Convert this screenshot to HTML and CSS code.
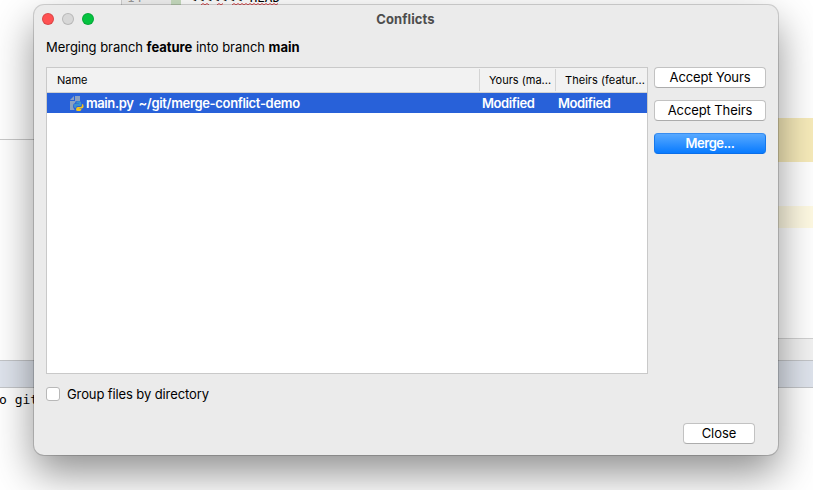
FILE: index.html
```html
<!DOCTYPE html>
<html lang="en">
<head>
<meta charset="utf-8">
<title>Conflicts</title>
<link rel="stylesheet" href="styles.css">
</head>
<body>
<div class="screen">
  <div class="ide">
    <div class="workspace">
      <div class="sidebar"><div class="sidebar-top"></div></div>
      <div class="editor">
        <div class="code">
          <div class="gutter">14</div>
          <div class="change"></div>
          <div class="lines">
            <div class="line">
              <div class="source">&lt;&lt;&lt;&lt;&lt;&lt;&lt; HEAD</div>
              <svg class="squiggles" width="90" height="3" viewBox="0 0 90 3" fill="none" stroke="#e5484d">
                <path d="M11 2l2-1.500 2 1.500 2-1.500 2 1.500M27 2l2-1.500 2 1.500 2-1.500M42 2l2-1.500 2 1.500 2-1.500 2 1.500 2-1.500 2 1.500 2-1.500 2 1.500 2-1.500 2 1.500 2-1.500 2 1.500 2-1.500 2 1.500 2-1.500 2 1.500 2-1.500 2 1.500 2-1.500 2 1.500 2-1.500 2 1.500 2-1.500"/>
              </svg>
            </div>
            <div class="highlight strong"></div>
            <div class="highlight soft"></div>
          </div>
        </div>
        <div class="breadcrumbs"></div>
      </div>
    </div>
    <div class="toolbar"></div>
    <div class="terminal">o git</div>
  </div>

  <main class="dialog">
    <header class="titlebar">
      <div class="lights"><i class="red"></i><i class="gray"></i><i class="green"></i></div>
      <h1>Conflicts</h1>
    </header>
    <p class="message">Merging branch <b>feature</b> into branch <b>main</b></p>
    <div class="content">
      <div class="table">
        <div class="row head"><div>Name</div><div>Yours (ma...</div><div>Theirs (featur...</div></div>
        <div class="row selected">
          <div class="file">
            <svg width="15" height="16" viewBox="0 0 15 16">
              <path d="M6 1h5v5H8Q6 6 6 8 4 8.500 4 11t1.500 3.500V15H1V6h5z" fill="#8ba1c1"/>
              <path d="M1 5l4-4v4z" fill="#8ba1c1"/>
              <path d="M8.500 6.300h2.200q1.500 0 1.500 1.500v2q0 1.200-1.200 1.200H8.500q-1.500 0-1.500 2-2.300 0-2.300-2.200T7 8.800h3v-.500H7.300q-.300-2 1.200-2z" fill="#3b91cf"/>
              <path d="M12.900 9q1.700 0 1.700 2.200t-2.200 2.300h-1.900v.500h1.900q0 2-1.600 2H8.700Q7 16 7 14.500q0-2.500 1.700-2.500h2.700q1.500 0 1.500-1.500z" fill="#f3c51c"/>
            </svg>
            <span>main.py</span><span class="path">~/git/merge-conflict-demo</span>
          </div>
          <div>Modified</div><div>Modified</div>
        </div>
      </div>
      <div class="actions">
        <button>Accept Yours</button>
        <button class="theirs">Accept Theirs</button>
        <button class="primary">Merge...</button>
      </div>
    </div>
    <label class="group"><i class="box"></i><span>Group files by directory</span></label>
    <footer><button class="close">Close</button></footer>
  </main>
</div>
</body>
</html>
```
FILE: styles.css
```css
* { box-sizing: border-box; }
body {
  margin: 0;
  overflow: hidden;
  background: #fff;
  color: #000;
  font: 13px/16px Inter, "Liberation Sans", sans-serif;
}
.screen { display: grid; width: 813px; height: 490px; overflow: hidden; }
.ide, .dialog { grid-area: 1 / 1; }

.ide { display: flex; flex-direction: column; min-width: 0; }
.workspace { display: flex; height: 360px; }
.sidebar { width: 122px; border-right: 1px solid #d0d0d0; }
.sidebar-top { height: 140px; border-bottom: 1px solid #c9c9c9; }
.editor { flex: 1; display: flex; flex-direction: column; }
.code { flex: 1; display: flex; min-height: 0; }
.gutter, .source { font: 12.6px/16px "DejaVu Sans Mono", monospace; }
.gutter { width: 49px; padding-left: 5px; background: #f2f2f2; color: #999; line-height: 0; margin-top: -2px; }
.change { width: 10px; background: #c9dec1; }
.lines { flex: 1; display: flex; flex-direction: column; }
.line { height: 118px; padding-left: 8px; }
.source { height: 16px; margin-top: -10px; }
.squiggles { display: block; margin: -3px 0 0 1px; }
.highlight.strong { height: 44px; background: #f7ebba; }
.highlight.soft { height: 22px; margin-top: 44px; background: #fffae3; }
.breadcrumbs { height: 22px; border-top: 1px solid #d1d1d1; background: #f2f2f2; }
.toolbar { height: 28px; border: solid #c3c5c8; border-width: 1px 0; background: #dfe4ed; }
.terminal { margin-left: -1px; padding-top: 3px; font: 13px/17px "DejaVu Sans Mono", monospace; }

.dialog {
  z-index: 1;
  display: flex;
  flex-direction: column;
  width: 744px;
  height: 450px;
  margin: 5px 0 0 34px;
  padding: 0 12px;
  border-radius: 10px;
  background: #ebebeb;
  box-shadow: 0 0 0 1px rgba(0,0,0,.16), 0 18px 40px rgba(0,0,0,.44);
}
.titlebar { display: grid; grid-template-columns: 1fr auto 1fr; height: 28px; align-items: center; }
.lights { display: flex; gap: 8px; margin-left: -4px; }
.lights i { width: 12px; height: 12px; border-radius: 50%; border: 1px solid rgba(0,0,0,.14); }
.red { background: #ff5152; }
.gray { background: #d7d7d7; }
.green { background: #05c340; }
h1 { margin: 0 0 0 -1px; font-size: 13px; line-height: 16px; font-weight: 650; letter-spacing: .1px; color: #4d4d4d; }
.message { margin: 6px 0 0; white-space: nowrap; letter-spacing: -.03px; }
.content { display: flex; gap: 6px; margin-top: 12px; }
.table { width: 602px; height: 307px; border: 1px solid #c9c9c9; background: #fff; }
.row { display: grid; grid-template-columns: 433px 76px 91px; align-items: center; white-space: nowrap; }
.head { height: 25px; border-bottom: 1px solid #d0d0d0; background: #f2f2f2; font-size: 11px; }
.head div { height: 22px; padding-left: 9px; line-height: 22px; border-right: 1px solid #d4d4d4; }
.head div:first-child { padding-left: 10px; }
.head div:last-child { border: 0; letter-spacing: .04px; }
.selected { height: 20px; background: #2861d9; color: #fff; font-weight: 600; letter-spacing: -.4px; }
.selected > div { padding-left: 2px; }
.selected .file { display: flex; align-items: center; padding-left: 22px; }
.file svg { margin-right: 2px; }
.path { margin-left: 5px; letter-spacing: -.33px; }
.actions { display: flex; flex-direction: column; gap: 12px; }
button {
  width: 112px;
  height: 21px;
  padding: 0;
  border: 1px solid #c2c2c2;
  border-bottom-color: #acacac;
  border-radius: 4px;
  background: #fff;
  color: #000;
  font: inherit;
  line-height: 19px;
  letter-spacing: -.12px;
}
.theirs { letter-spacing: -.1px; }
.primary { border-color: #388df0 #1679ec #0a6ee8; background: linear-gradient(#58a9ff, #087bff); color: #fff; font-weight: 600; letter-spacing: -.5px; }
.group { display: flex; align-items: center; gap: 7px; margin-top: 12px; letter-spacing: -.11px; }
.box { width: 14px; height: 14px; border: 1px solid #b8b8b8; border-radius: 3px; background: #fff; }
footer { display: flex; justify-content: flex-end; margin-top: 21px; }
.close { width: 72px; margin-right: 11px; letter-spacing: -.05px; }
```
